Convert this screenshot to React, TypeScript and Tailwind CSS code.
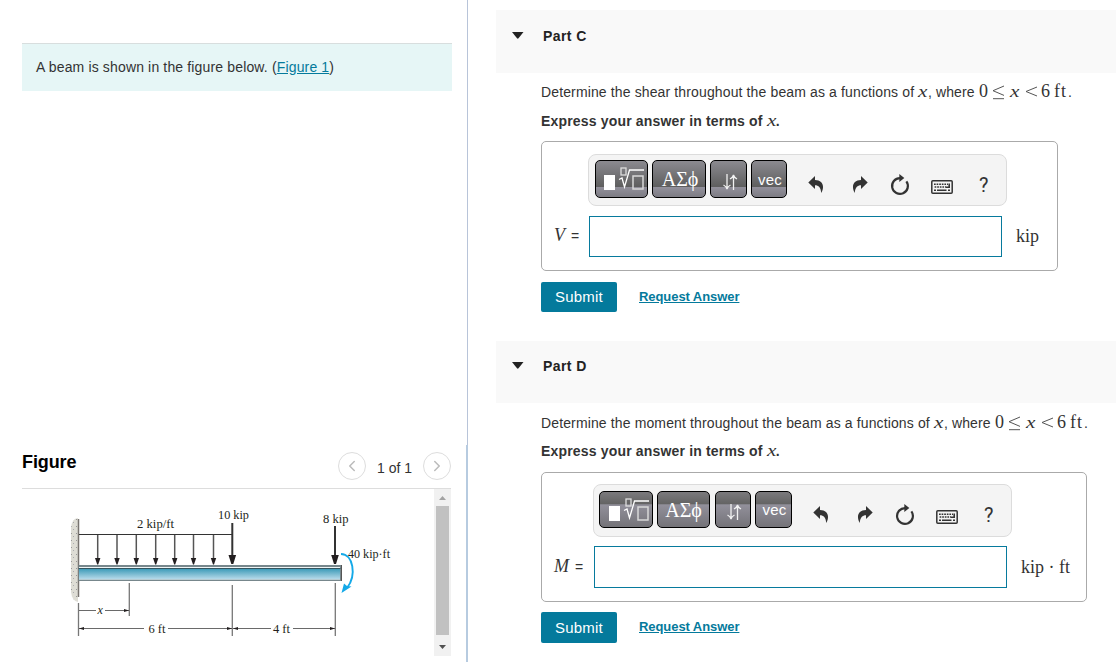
import type { ReactNode } from "react";
import { ChevronLeft, ChevronRight } from "lucide-react";
import clsx from "clsx";

type Part = {
  id: string;
  quantity: string;
  symbol: string;
  unit: string;
};

const parts: Part[] = [
  { id: "C", quantity: "shear", symbol: "V", unit: "kip" },
  { id: "D", quantity: "moment", symbol: "M", unit: "kip · ft" },
];

const loadArrows = [97.7, 117, 136.3, 155.7, 174.7, 193.5, 213.5];

function BeamFigure() {
  return (
    <svg
      viewBox="22 489 412 167"
      className="h-[167px] w-[412px]"
      fontFamily="Liberation Serif, serif"
      fontSize="12"
      fill="#231f20"
    >
      <defs>
        <linearGradient id="beam" x1="0" y1="0" x2="0" y2="1">
          <stop offset="0" stopColor="#3f9cb9" />
          <stop offset="1" stopColor="#b5d9e9" />
        </linearGradient>
        <pattern id="wall" width="5" height="7" patternUnits="userSpaceOnUse">
          <rect width="5" height="7" fill="#deddd5" />
          <rect x="1" y="1" width="1" height="1" fill="#9a9a9a" />
          <rect x="3" y="4" width="1" height="1" fill="#aaaaae" />
        </pattern>
      </defs>

      {/* fixed support */}
      <path d="M78 518Q72 518 71 528V592Q72 601 78 602Z" fill="url(#wall)" />
      <path d="M78.5 519V597" stroke="#77736f" strokeWidth="1.5" />

      {/* distributed load */}
      <path d="M79 534.5H232" stroke="#333" />
      {loadArrows.map((x) => (
        <g key={x}>
          <path d={`M${x} 535V559`} stroke="#555" strokeWidth="1.5" />
          <path d={`M${x - 2.7} 558h5.4l-2.2 6.5h-1z`} />
        </g>
      ))}

      {/* point loads */}
      <path d="M232.3 523V556M335 526V556" stroke="#333" strokeWidth="2" />
      <path d="M228.5 555h7.6l-2.8 9h-2zM331.2 555h7.6l-2.8 9h-2z" />

      {/* beam */}
      <rect x="78.5" y="565" width="263.5" height="16" fill="#77878c" />
      <rect x="79" y="567" width="261" height="1" fill="#eef4f5" />
      <rect x="78.5" y="568" width="262" height="1" fill="#33545f" />
      <rect x="79" y="569" width="261" height="10" fill="url(#beam)" />
      <rect x="79" y="579" width="261" height="1" fill="#b6cbd2" />
      <path d="M341.5 565V581" stroke="#555" />

      {/* end moment */}
      <path d="M341 554C353 554 357 575 347 588" fill="none" stroke="#14a9e8" strokeWidth="1.9" />
      <path d="M341.5 593l2.5-9.5 3 2.5 4.5.5z" fill="#14a9e8" />

      {/* dimensions */}
      <path
        d="M78.5 603V636M129.3 583V616M232.3 585V636M335.3 583V636"
        stroke="#777"
        strokeWidth="1.3"
      />
      <path
        d="M79 610.5H96M105 610.5H129M79 628.5H144M168 628.5H232M233 628.5H271M293 628.5H335"
        stroke="#444"
        strokeWidth="0.8"
      />
      <path d="M129 610.5l-5-1.5v3zM79 628.5l5-1.5v3zM232 628.5l-5-1.5v3zM233 628.5l5-1.5v3zM335 628.5l-5-1.5v3z" />

      <text x="137" y="528" textLength="37" lengthAdjust="spacingAndGlyphs">2 kip/ft</text>
      <text x="218" y="518.5" textLength="31" lengthAdjust="spacingAndGlyphs">10 kip</text>
      <text x="323" y="523" textLength="25.5" lengthAdjust="spacingAndGlyphs">8 kip</text>
      <text x="348" y="558" textLength="42" lengthAdjust="spacingAndGlyphs">40 kip·ft</text>
      <text x="97.5" y="614" fontStyle="italic">x</text>
      <text x="148.5" y="632.5" textLength="17" lengthAdjust="spacingAndGlyphs">6 ft</text>
      <text x="273" y="632.5" textLength="17" lengthAdjust="spacingAndGlyphs">4 ft</text>
    </svg>
  );
}

function UndoIcon({ className }: { className?: string }) {
  return (
    <svg viewBox="0 0 16 18" className={clsx("h-[18px] w-4", className)} fill="#333">
      <path d="M7 0L0.3 6.5L7 13V9.2C10.5 9.2 13 11.5 13.2 17C17 10.2 14.8 4.4 7 4.1Z" />
    </svg>
  );
}

function RefreshIcon() {
  return (
    <svg viewBox="0 0 20 22" className="h-[22px] w-5">
      <path d="M10 4.1A7.9 7.9 0 1 0 16.4 7.4" fill="none" stroke="#333" strokeWidth="2.2" />
      <path d="M9.3 0L14.3 4L9.3 8Z" fill="#333" />
    </svg>
  );
}

function KeyboardIcon() {
  return (
    <svg viewBox="0 0 22 14" className="h-3.5 w-[22px]">
      <rect x="0.8" y="0.8" width="20.4" height="12.4" rx="1" fill="none" stroke="#333" strokeWidth="1.5" />
      <path d="M3 4.2H17M3.6 7H15" stroke="#333" strokeWidth="1.6" strokeDasharray="1.7 0.9" />
      <path d="M3 10.2H5M6 10.2H15.5M17 10.2H19M18.2 3.4V7.2H15" fill="none" stroke="#333" strokeWidth="1.6" />
    </svg>
  );
}

function TemplateIcon() {
  return (
    <svg viewBox="0 0 42 26" className="h-[26px] w-[42px] shrink-0" fill="none" stroke="white">
      <rect x="1" y="8" width="11" height="15" fill="white" stroke="none" />
      <rect x="18" y="1" width="5" height="7" stroke="#ddd" strokeWidth="1.3" />
      <path d="M16 12.5l3-1.5L21.5 20L26.5 3H41" strokeWidth="1.3" />
      <rect x="30" y="9" width="10" height="13" stroke="#d8d8d8" strokeWidth="1.5" />
    </svg>
  );
}

function ArrowsIcon() {
  return (
    <svg viewBox="0 0 16 18" className="h-[18px] w-4" fill="none" stroke="#f2f2f2" strokeWidth="1.3">
      <path d="M5 1V16M1.5 12Q4.4 13.5 5 16Q5.6 13.5 8.5 12" />
      <path d="M11.5 17V2M8 6Q10.9 4.5 11.5 2Q12.1 4.5 15 6" />
    </svg>
  );
}

function ToolButton({ className, children, alt }: { className: string; children: ReactNode; alt: boolean }) {
  return (
    <button
      className={clsx(
        "flex shrink-0 items-center justify-center overflow-hidden rounded-[5px] border border-black text-white",
        alt
          ? "h-[37px] bg-[linear-gradient(#7b7a7d_0%,#636363_35%,#92909b_36%,#747378_100%)]"
          : "h-[38px] bg-[linear-gradient(#8b8a90_0%,#5e5e5e_72%,#92909b_73%,#7d7c83_100%)]",
        className
      )}
    >
      {children}
    </button>
  );
}

function Toolbar({ alt }: { alt: boolean }) {
  return (
    <div
      className={clsx(
        "flex w-[419px] items-start rounded-lg border border-[#dcdcdc] bg-[#f4f4f4]",
        alt ? "h-[53px] pt-1.5 pl-[5px]" : "h-[52px] pt-[5px] pl-1.5"
      )}
    >
      <div className="flex gap-1">
        <ToolButton alt={alt} className={alt ? "w-[54px] pt-0.5 pl-1.5" : "w-[53px] pt-0.5 pl-1"}>
          <TemplateIcon />
        </ToolButton>
        <ToolButton
          alt={alt}
          className={clsx("font-['Liberation_Serif',serif] text-[20px]", alt ? "w-[53px]" : "w-[54px] pl-0.5")}
        >
          ΑΣϕ
        </ToolButton>
        <ToolButton alt={alt} className={alt ? "ml-px w-9 pt-1 pl-0.5" : "w-[37px] pt-[5px] pl-0.5"}>
          <ArrowsIcon />
        </ToolButton>
        <ToolButton
          alt={alt}
          className={clsx("pl-0.5 text-[15px] tracking-[0.2px]", alt ? "w-[37px]" : "w-9")}
        >
          <span className="pt-0.5">vec</span>
        </ToolButton>
      </div>
      <div className={clsx("flex items-start text-[#333]", alt ? "pt-[13px] pl-[21px]" : "pt-3.5 pl-[21px]")}>
        <UndoIcon className="mt-0.5" />
        <UndoIcon className="mt-0.5 ml-7 -scale-x-100" />
        <div className="ml-[22px]">
          <RefreshIcon />
        </div>
        <div className="mt-1.5 ml-[21px]">
          <KeyboardIcon />
        </div>
        <span className="mt-px ml-[26px] font-['Roboto',sans-serif] text-[20px] leading-5">?</span>
      </div>
    </div>
  );
}

function MathX({ className }: { className?: string }) {
  return (
    <i className={clsx("inline-block origin-left scale-x-125 font-['Liberation_Serif',serif] text-[17px] leading-4", className)}>
      x
    </i>
  );
}

function Prompt({ quantity }: { quantity: string }) {
  return (
    <p className="flex h-5 items-baseline whitespace-nowrap text-[14px] leading-5">
      <span className={quantity === "shear" ? "w-[377px] tracking-[0.13px]" : "w-[393px] tracking-[0.13px]"}>
        Determine the {quantity} throughout the beam as a functions of
      </span>
      <MathX className="w-2.5" />
      <span className="w-[51px] tracking-[0.1px]">, where</span>
      <span className="flex items-baseline font-['Liberation_Serif',serif] text-[18px] leading-4">
        <span className="w-[13px]">0</span>
        <svg viewBox="0 0 13 15" className="mr-[5px] h-[15px] w-[13px] translate-y-[3px]" fill="none" stroke="#555">
          <path d="M12 1L1 5.7L12 10.4M1 13.7H12" />
        </svg>
        <MathX className="w-[15px]" />
        <svg viewBox="0 0 13 11" className="mr-[3px] h-[11px] w-[13px]" fill="none" stroke="#555">
          <path d="M12 1L1 5.5L12 10" />
        </svg>
        <span className="w-[13px]">6</span>
        <span className="w-[14px] tracking-[1px]">ft</span>
      </span>
      <span>.</span>
    </p>
  );
}

function PartSection({ part }: { part: Part }) {
  const alt = part.id === "D";
  return (
    <section>
      <header className={clsx("flex bg-[#f9f9f9] pl-4", alt ? "h-[62px] pt-[15px]" : "h-[63px] pt-4")}>
        <svg viewBox="0 0 12 7" className="mt-1.5 h-[7px] w-3" fill="#222">
          <path d="M0 0H11.5L6.5 6.3Q5.7 7 5 6.3Z" />
        </svg>
        <h2 className="ml-[19px] text-[14px] leading-5 font-bold tracking-[0.4px] text-[#222]">Part {part.id}</h2>
      </header>
      <div className={clsx("pl-[45px]", alt ? "pt-2.5" : "pt-[9px]")}>
        <Prompt quantity={part.quantity} />
        <p className={clsx("h-5 whitespace-nowrap text-[14px] leading-5 font-bold tracking-[0.17px]", alt ? "mt-2" : "mt-[9px]")}>
          Express your answer in terms of <MathX className="w-[9px] font-normal" />.
        </p>
        <div
          className={clsx(
            "h-[130px] rounded-[5px] border border-[#aaa]",
            alt ? "mt-[11px] w-[546px] pt-[11px] pl-3" : "mt-2.5 w-[517px] pt-3 pl-3"
          )}
        >
          <div className={alt ? "pl-[39px]" : "pl-[34px]"}>
            <Toolbar alt={alt} />
          </div>
          <div className={clsx("flex items-center", alt ? "mt-[9px]" : "mt-2.5")}>
            <label className={clsx("flex items-baseline pb-0.5", alt ? "w-10" : "w-[35px]")}>
              <i className="font-['Liberation_Serif',serif] text-[18px]">{part.symbol}</i>
              <span className="ml-1.5 text-[14px]">=</span>
            </label>
            <input className={clsx("w-[413px] border border-[#077a9d] bg-white", alt ? "h-[42px]" : "h-[41px]")} />
            <span className="ml-3.5 whitespace-nowrap font-['Liberation_Serif',serif] text-[18px]">
              {part.unit}
            </span>
          </div>
        </div>
        <div className={clsx("flex items-center", alt ? "mt-2.5" : "mt-[11px]")}>
          <button
            className={clsx(
              "w-[76px] rounded-[2px] bg-[#047a9c] text-[15px] tracking-[0.2px] text-white",
              alt ? "h-[31px] pt-px" : "h-[30px]"
            )}
          >
            Submit
          </button>
          <a className="ml-[22px] pb-px text-[13px] font-bold tracking-[-0.07px] text-[#047a9c] underline">Request Answer</a>
        </div>
      </div>
    </section>
  );
}

export default function App() {
  return (
    <div className="flex h-[662px] w-[1116px] overflow-hidden bg-white font-['Liberation_Sans',sans-serif] text-[#333]">
      <aside className="flex w-[468px] flex-col">
        <div className="h-[445px] border-r border-[#b8c4d9] pt-[43px] pl-[22px]">
          <p className="h-12 w-[430px] border-t border-[#d8dede] bg-[#e6f6f6] pt-[13px] pl-3.5 text-[14px] leading-5 tracking-[0.15px]">
            A beam is shown in the figure below. (<a className="text-[#047a9c] underline">Figure 1</a>)
          </p>
        </div>
        <div className="h-[217px] border-r-2 border-[#b7cbe0] pl-[22px]">
          <div className="flex h-11 w-[429px] border-b border-[#ddd] pt-[7px]">
            <h3 className="mr-auto text-[18px] leading-5 font-bold tracking-[-0.1px] text-black">Figure</h3>
            <button className="flex h-7 w-7 items-center justify-center rounded-full border border-[#ddd] text-[#bbb]">
              <ChevronLeft size={18} />
            </button>
            <span className="mx-[11px] pt-1.5 text-[14px] leading-5 whitespace-nowrap">1 of 1</span>
            <button className="flex h-7 w-7 items-center justify-center rounded-full border border-[#ddd] text-[#bbb]">
              <ChevronRight size={18} />
            </button>
          </div>
          <div className="flex">
            <BeamFigure />
            <div className="flex h-[167px] w-[17px] flex-col items-center bg-[#f1f1f1] pt-[7px]">
              <svg viewBox="0 0 7 4" className="h-1 w-[7px]" fill="#a3a3a3">
                <path d="M0 4L3.5 0L7 4Z" />
              </svg>
              <div className="mt-1.5 mb-2.5 h-[129px] w-[13px] bg-[#c1c1c1]" />
              <svg viewBox="0 0 7 4" className="h-1 w-[7px]" fill="#505050">
                <path d="M0 0L3.5 4L7 0Z" />
              </svg>
            </div>
          </div>
        </div>
      </aside>
      <main className="flex w-[648px] flex-col gap-[29px] pt-2.5 pl-7">
        {parts.map((part) => (
          <PartSection key={part.id} part={part} />
        ))}
      </main>
    </div>
  );
}
